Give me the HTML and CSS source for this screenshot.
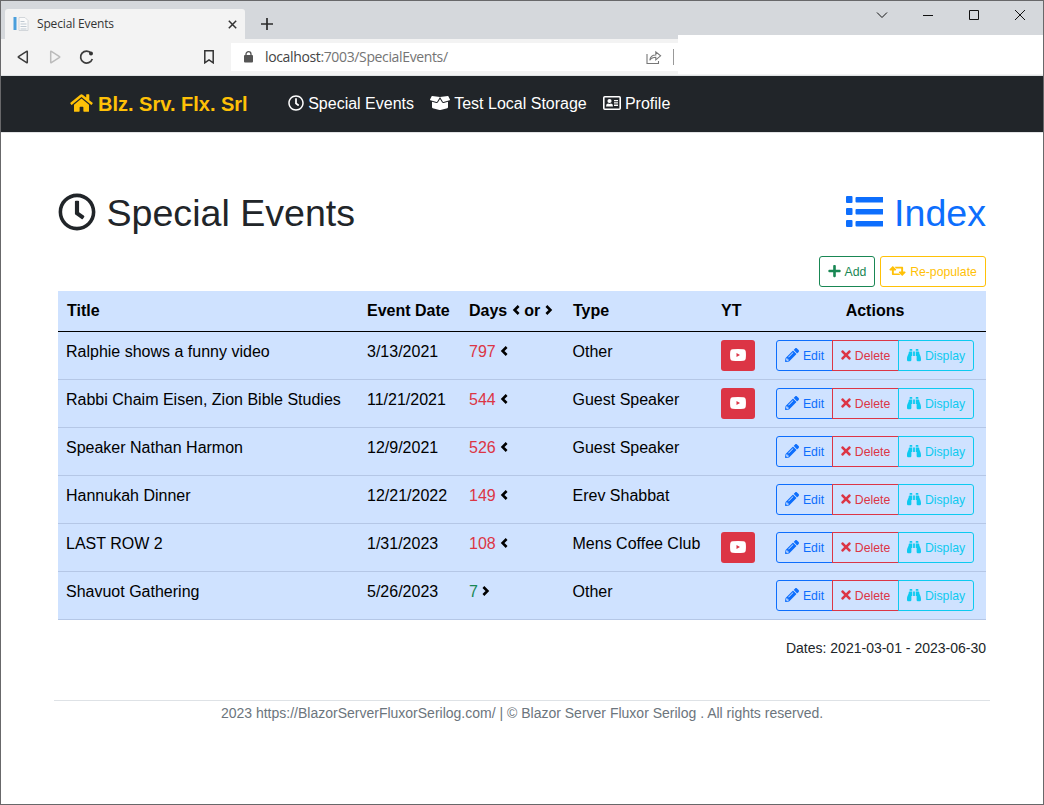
FILE: index.html
```html
<!DOCTYPE html>
<html lang="en">
<head>
<meta charset="utf-8">
<title>Special Events</title>
<link rel="stylesheet" href="styles.css">
</head>
<body>
<svg class="defs" aria-hidden="true">
  <symbol id="clock" viewBox="0 0 512 512"><path d="M256 8C119 8 8 119 8 256s111 248 248 248 248-111 248-248S393 8 256 8zm0 448c-110.500 0-200-89.500-200-200S145.500 56 256 56s200 89.500 200 200-89.500 200-200 200zm61.800-104.400l-84.900-61.700c-3.100-2.300-4.900-5.900-4.900-9.700V116c0-6.600 5.400-12 12-12h32c6.600 0 12 5.400 12 12v141.700l66.800 48.600c5.400 3.900 6.500 11.400 2.600 16.800L334.600 349c-3.900 5.300-11.400 6.500-16.800 2.600z"/></symbol>
  <symbol id="home" viewBox="0 0 576 512"><path d="M280.370 148.260L96 300.110V464a16 16 0 0 0 16 16l112.060-.29a16 16 0 0 0 15.920-16V368a16 16 0 0 1 16-16h64a16 16 0 0 1 16 16v95.640a16 16 0 0 0 16 16.050L464 480a16 16 0 0 0 16-16V300L295.670 148.260a12.190 12.190 0 0 0-15.300 0zM571.600 251.470L488 182.560V44.050a12 12 0 0 0-12-12h-56a12 12 0 0 0-12 12v72.610L318.470 43a48 48 0 0 0-61 0L4.340 251.470a12 12 0 0 0-1.600 16.900l25.500 31A12 12 0 0 0 45.150 301l235.220-193.740a12.190 12.190 0 0 1 15.300 0L530.900 301a12 12 0 0 0 16.900-1.600l25.500-31a12 12 0 0 0-1.700-16.930z"/></symbol>
  <symbol id="box" viewBox="0 0 640 512"><path d="M425.700 256c-16.900 0-32.800-9-41.400-23.400L320 126l-64.200 106.600c-8.700 14.500-24.600 23.500-41.500 23.500-4.500 0-9-.6-13.300-1.900L64 215v178c0 14.700 10 27.500 24.200 31l216.200 54.100c10.200 2.500 20.900 2.500 31 0L551.800 424c14.200-3.600 24.200-16.400 24.200-31V215l-137 39.100c-4.300 1.300-8.800 1.900-13.300 1.900zm212.600-112.200L586.800 41c-3.100-6.200-9.800-9.800-16.700-8.900L320 64l91.700 152.100c3.800 6.300 11.400 9.300 18.500 7.300l197.900-56.500c9.900-2.900 14.700-13.900 10.200-23.100zM53.200 41L1.700 143.800c-4.600 9.200.3 20.200 10.100 23l197.900 56.500c7.100 2 14.700-1 18.500-7.300L320 64 69.800 32.100c-6.900-.8-13.500 2.700-16.600 8.900z"/></symbol>
  <symbol id="card" viewBox="0 0 18 14"><rect x=".8" y=".8" width="16.400" height="12.400" rx="1" fill="none" stroke="currentColor" stroke-width="1.600"/><circle cx="6.500" cy="5" r="2.100"/><path d="M3 10.500Q3 7.800 5 7.600q1.500.6 3 0 2 .2 2 2.900zM11 4h4v1.300h-4zM11 6.300h4v1.300h-4zM11 8.600h4v1.300h-4z"/></symbol>
  <symbol id="list" viewBox="0 0 38 38"><rect x="1" y="3" width="6.500" height="7" rx="1"/><rect x="1" y="15" width="6.500" height="7" rx="1"/><rect x="1" y="27" width="6.500" height="7" rx="1"/><rect x="10.500" y="4" width="28" height="5.500" rx="1"/><rect x="10.500" y="16" width="28" height="5.500" rx="1"/><rect x="10.500" y="28" width="28" height="5.500" rx="1"/></symbol>
  <symbol id="plus" viewBox="0 0 448 512"><path d="M416 208H272V64c0-17.670-14.330-32-32-32h-32c-17.670 0-32 14.330-32 32v144H32c-17.670 0-32 14.330-32 32v32c0 17.670 14.330 32 32 32h144v144c0 17.670 14.330 32 32 32h32c17.670 0 32-14.330 32-32V304h144c17.670 0 32-14.330 32-32v-32c0-17.670-14.330-32-32-32z"/></symbol>
  <symbol id="retweet" viewBox="0 0 17 14"><path d="M3.800 2L7.300 5.600 6.600 6.400H4.800V9.400H9.900l1.500 1.600H3.600Q2.900 11 2.900 10.300V6.400H1L.3 5.600zM13.200 12L9.700 8.400l.7-.8h1.800V4.400H7.100L5.600 2.800h7.800q.7 0 .7.700v4.100H16l.7.800z"/></symbol>
  <symbol id="pencil" viewBox="0 0 512 512"><path d="M497.900 142.100l-46.100 46.100c-4.700 4.700-12.300 4.700-17 0l-111-111c-4.700-4.700-4.700-12.300 0-17l46.100-46.100c18.700-18.700 49.100-18.700 67.900 0l60.100 60.100c18.800 18.700 18.800 49.100 0 67.900zM284.200 99.800L21.600 362.400.4 483.900c-2.900 16.400 11.400 30.600 27.800 27.800l121.500-21.300 262.600-262.600c4.700-4.700 4.700-12.300 0-17l-111-111c-4.800-4.700-12.400-4.700-17.100 0zM124.100 339.900c-5.500-5.500-5.500-14.300 0-19.800l154-154c5.500-5.500 14.300-5.500 19.800 0s5.500 14.300 0 19.800l-154 154c-5.500 5.500-14.300 5.500-19.800 0zM88 424h48v36.300l-64.500 11.300-31.100-31.100L51.700 376H88v48z"/></symbol>
  <symbol id="times" viewBox="0 0 352 512"><path d="M242.720 256l100.070-100.070c12.280-12.280 12.280-32.190 0-44.480l-22.240-22.240c-12.280-12.280-32.190-12.280-44.480 0L176 189.280 75.930 89.210c-12.280-12.280-32.190-12.280-44.480 0L9.210 111.450c-12.280 12.280-12.280 32.190 0 44.480L109.280 256 9.210 356.070c-12.280 12.280-12.280 32.190 0 44.480l22.240 22.240c12.280 12.280 32.200 12.280 44.480 0L176 322.720l100.070 100.070c12.280 12.280 32.200 12.280 44.480 0l22.240-22.240c12.280-12.280 12.280-32.190 0-44.480L242.720 256z"/></symbol>
  <symbol id="binoculars" viewBox="0 0 512 512"><path d="M416 48c0-8.840-7.160-16-16-16h-64c-8.840 0-16 7.160-16 16v48h96V48zM63.910 159.990C61.400 253.840 3.460 274.220 0 404v44c0 17.670 14.330 32 32 32h96c17.670 0 32-14.330 32-32V288h32V128H95.840c-17.630 0-31.450 14.370-31.930 31.990zm384.180 0c-.48-17.620-14.300-31.990-31.930-31.990H320v160h32v160c0 17.670 14.330 32 32 32h96c17.670 0 32-14.330 32-32v-44c-3.460-129.780-61.400-150.160-63.910-244.010zM176 32h-64c-8.840 0-16 7.160-16 16v48h96V48c0-8.840-7.160-16-16-16zm48 256h64V128h-64v160z"/></symbol>
  <symbol id="youtube" viewBox="0 0 16 12"><path fill-rule="evenodd" d="M2.500.3Q8-.2 13.500.3 15.400.5 15.700 2.300q.5 3.700 0 7.400-.3 1.800-2.200 2-5.500.5-11 0Q.6 11.500.3 9.700q-.5-3.700 0-7.400Q.6.500 2.500.3zM6.500 4v4L10 6z"/></symbol>
  <symbol id="less" viewBox="0 0 8 10"><path d="M6.600 1L2.600 5l4 4" fill="none" stroke="currentColor" stroke-width="2.600"/></symbol>
  <symbol id="more" viewBox="0 0 8 10"><path d="M1.400 1l4 4-4 4" fill="none" stroke="currentColor" stroke-width="2.600"/></symbol>
</svg>

<div class="window">
  <div class="tabstrip">
    <div class="tab">
      <svg class="favicon" width="16" height="16" viewBox="0 0 16 16"><path fill="#4a9fdc" d="M.5 1h3v13h-3z"/><path fill="#fafafa" stroke="#c9ced3" stroke-width=".8" d="M6 1.500h6l3 3v10H6z"/><path fill="none" stroke="#bfc9d2" d="M7.500 5.500h4M7.500 8h6M7.500 10.500h6M7.500 13h6"/></svg>
      <span class="tab-title">Special Events</span>
      <svg width="9" height="9" viewBox="0 0 9 9"><path d="M.8.8l7.400 7.400M8.200.8L.8 8.200" stroke="#333" stroke-width="1.500"/></svg>
    </div>
    <svg class="newtab" width="12" height="12" viewBox="0 0 12 12"><path d="M6 0v12M0 6h12" stroke="#2b2b2b" stroke-width="1.700"/></svg>
    <div class="controls">
      <svg width="12" height="12" viewBox="0 0 12 12"><path d="M1 3.500l5 5 5-5"/></svg>
      <svg width="12" height="12" viewBox="0 0 12 12"><path d="M1 6.500h10"/></svg>
      <svg width="12" height="12" viewBox="0 0 12 12"><path d="M1.500 1.500h9v9h-9z"/></svg>
      <svg width="12" height="12" viewBox="0 0 12 12"><path d="M1 1l10 10M11 1L1 11"/></svg>
    </div>
  </div>
  <div class="toolbar">
    <div class="navicons">
      <svg width="12" height="14" viewBox="0 0 12 14"><path d="M10.300 1.700v10.600q0 .7-.7.300L1.500 7.400q-.5-.4 0-.8l8.100-5.200q.7-.4.700.3z" stroke="#3c3c3c"/></svg>
      <svg width="12" height="14" viewBox="0 0 12 14"><path d="M1.700 1.700v10.600q0 .7.700.3l8.100-5.200q.5-.4 0-.8L2.400 1.400q-.7-.4-.7.300z" stroke="#bbb"/></svg>
      <svg class="reload" width="15" height="15" viewBox="0 0 15 15"><path d="M12.300 3.300A6 6 0 1 0 13.300 9" stroke="#3c3c3c" stroke-width="1.700"/><circle cx="12" cy="3.600" r="2" fill="#333"/></svg>
      <svg class="bookmark" width="10" height="14" viewBox="0 0 10 14"><path d="M.8.800h8.400v12L5 9.800l-4.200 3z" stroke="#333"/></svg>
    </div>
    <div class="address">
      <svg width="9" height="12" viewBox="0 0 9 12"><rect y="4" width="9" height="7.500" rx="1" fill="#555"/><path d="M2 5V3.200a2.500 2.500 0 0 1 5 0V5" fill="none" stroke="#555" stroke-width="1.300"/></svg>
      <span class="url"><b>localhost</b>:7003/SpecialEvents/</span>
      <svg class="share" width="16" height="15" viewBox="0 0 16 15"><path d="M1 4v9.500h11.500V11M3.800 10.300q.6-5.300 6-5.300V1.800l4.800 4-4.800 4.100V7.200q-4 0-6 3.100z" fill="none" stroke="#777" stroke-width="1.100"/></svg>
      <i class="divider"></i>
    </div>
    <div class="blank"></div>
  </div>

  <nav class="navbar">
    <a class="brand"><svg width="23" height="20"><use href="#home"/></svg><span>Blz. Srv. Flx. Srl</span></a>
    <a class="link"><svg width="16" height="16"><use href="#clock"/></svg><span>Special Events</span></a>
    <a class="link"><svg width="20" height="16"><use href="#box"/></svg><span>Test Local Storage</span></a>
    <a class="link"><svg width="18" height="14"><use href="#card"/></svg><span>Profile</span></a>
  </nav>

  <main class="content">
    <header class="heading">
      <h1><svg width="38" height="38"><use href="#clock"/></svg><span>Special Events</span></h1>
      <h1 class="index"><svg width="39" height="38" viewBox="0 0 39 38"><use href="#list" width="38" height="38"/></svg><span>Index</span></h1>
    </header>
    <div class="tools">
      <a class="btn green add"><svg width="13" height="14"><use href="#plus"/></svg><span>Add</span></a>
      <a class="btn yellow repop"><svg width="17" height="14"><use href="#retweet"/></svg><span>Re-populate</span></a>
    </div>
    <table class="events">
      <colgroup><col class="c1"><col class="c2"><col class="c3"><col class="c4"><col class="c5"><col class="c6"></colgroup>
      <thead><tr><th>Title</th><th>Event Date</th><th>Days <svg class="chev" width="8" height="10"><use href="#less"/></svg> or <svg class="chev" width="8" height="10"><use href="#more"/></svg></th><th>Type</th><th>YT</th><th class="mid">Actions</th></tr></thead>
      <tbody id="rows"></tbody>
    </table>
    <p class="dates">Dates: 2021-03-01 - 2023-06-30</p>
  </main>
  <footer class="footer">2023 https://BlazorServerFluxorSerilog.com/ | © Blazor Server Fluxor Serilog . All rights reserved.</footer>
</div>
<script src="rows.js"></script>
</body>
</html>
```

FILE: rows.js
```js
const events = [
  ["Ralphie shows a funny video", "3/13/2021", 797, true, "Other", true],
  ["Rabbi Chaim Eisen, Zion Bible Studies", "11/21/2021", 544, true, "Guest Speaker", true],
  ["Speaker Nathan Harmon", "12/9/2021", 526, true, "Guest Speaker", false],
  ["Hannukah Dinner", "12/21/2022", 149, true, "Erev Shabbat", false],
  ["LAST ROW 2", "1/31/2023", 108, true, "Mens Coffee Club", true],
  ["Shavuot Gathering", "5/26/2023", 7, false, "Other", false]
];
const icon = (id, w, h, cls = "") => `<svg class="${cls}" width="${w}" height="${h}"><use href="#${id}"/></svg>`;
document.getElementById("rows").innerHTML = events.map(([title, date, days, past, type, video]) => `
  <tr><td>${title}</td><td>${date}</td>
  <td><span class="${past ? "past" : "future"}">${days}</span> ${icon(past ? "less" : "more", 8, 10, "chev")}</td>
  <td>${type}</td>
  <td>${video ? `<a class="yt">${icon("youtube", 16, 12)}</a>` : ""}</td>
  <td class="actions"><div class="group">
    <a class="btn blue edit">${icon("pencil", 14, 14)}<span>Edit</span></a>
    <a class="btn red delete">${icon("times", 10, 14)}<span>Delete</span></a>
    <a class="btn cyan display">${icon("binoculars", 14, 14)}<span>Display</span></a>
  </div></td></tr>`).join("");
```

FILE: styles.css
```css
* { box-sizing: border-box; }
body { margin: 0; font: 16px/24px "Liberation Sans", Arial, sans-serif; color: #212529; background: #fff; }
svg { fill: currentColor; flex: none; }
.defs { display: none; }
.window { width: 1044px; height: 805px; border: 1px solid #68686a; overflow: hidden; background: #fff; }

.tabstrip { display: flex; height: 38px; padding: 8px 17px 0 4px; background: #d5d8dc; }
.tab { display: flex; align-items: center; width: 240px; height: 30px; padding: 0 8px; background: #f3f3f3; border-radius: 3px 3px 0 0; }
.tab-title { flex: 1; margin-left: 8px; font: 12px/16px "Open Sans", sans-serif; letter-spacing: -.15px; color: #333; }
.newtab { margin: 9px 0 0 16px; }
.controls { display: flex; gap: 34px; margin-left: auto; }
.controls svg { fill: none; stroke: #111; stroke-width: 1; }

.toolbar { display: flex; height: 37px; background: #f3f3f3; border-bottom: 1px solid #dfe3e4; }
.navicons { display: flex; align-items: center; width: 230px; padding-left: 16px; gap: 20px; }
.navicons svg { fill: none; stroke-width: 1.5; }
.navicons .reload { margin-left: -2px; }
.navicons .bookmark { margin-left: 90px; }
.address { display: flex; align-items: center; width: 447px; height: 28px; margin-top: 4px; padding: 0 4px 0 13px; background: #fff; }
.url { flex: 1; margin-left: 12px; font: 14px/20px "Open Sans", sans-serif; letter-spacing: -.36px; color: #747474; }
.url b { font-weight: 400; color: #444; }
.divider { width: 1px; height: 16px; margin-left: 11px; background: #999; }
.blank { flex: 1; height: 39px; margin: -4px 0 0; background: #fff; }

.navbar { display: flex; align-items: center; height: 57px; padding: 0 0 2px 69px; background: #212529; color: #fff; border-bottom: 1px solid #e2e3e5; }
.navbar span { padding-top: 2px; }
.brand { display: flex; align-items: center; gap: 5px; width: 218px; color: #ffc107; font-size: 20px; font-weight: 700; }
.link { display: flex; align-items: center; gap: 4.2px; margin-right: 16px; }

.content { padding: 55px 57px 0; }
.heading { display: flex; justify-content: space-between; height: 48px; }
h1 { display: flex; align-items: center; gap: 10.5px; margin: 0; font-size: 37.6px; line-height: 48px; font-weight: 400; }
h1 span { padding-top: 2px; }
.index { color: #0d6efd; }
.tools { display: flex; justify-content: flex-end; gap: 5px; margin-top: 20px; }
.btn { display: flex; align-items: center; justify-content: center; gap: 4px; height: 31px; border: 1px solid currentColor; border-radius: 3px; font-size: 12.25px; }
.btn svg, .yt svg { margin-bottom: 2px; }
.add { width: 56px; }
.repop { width: 106px; }
.green { color: #198754; }
.yellow { color: #ffc107; }
.blue { color: #0d6efd; }
.red { color: #dc3545; }
.cyan { color: #0dcaf0; }

.events { width: 928px; margin-top: 4px; border-collapse: separate; border-spacing: 0; table-layout: fixed; background: #cfe2ff; color: #000; }
.c1 { width: 301px; }
.c2 { width: 102px; }
.c3 { width: 104px; }
.c4 { width: 148px; }
.c5 { width: 51px; }
.c6 { width: 222px; }
.events th { height: 41px; padding: 8px 0 8px 8px; border-bottom: 1px solid #000; text-align: left; white-space: nowrap; }
.events th:first-child { padding-left: 9px; }
.events .mid { padding-left: 0; text-align: center; }
.events td { height: 48px; padding: 8px 0 8px 8px; border-bottom: 1px solid #b5c7e6; vertical-align: top; white-space: nowrap; }
.events td:nth-child(4) { padding-left: 7.5px; }
.events .actions { padding-left: 12px; }
.chev { vertical-align: 1px; }
.past { color: #dc3545; }
.future { color: #198754; }
.yt { display: flex; align-items: center; justify-content: center; width: 34px; height: 31px; border-radius: 3px; background: #dc3545; color: #fff; }
.group { display: flex; }
.edit { width: 57px; border-radius: 3px 0 0 3px; }
.delete { width: 67px; margin-left: -1px; border-radius: 0; }
.display { width: 76px; margin-left: -1px; border-radius: 0 3px 3px 0; }

.dates { margin: 18px 0 0; font-size: 14px; line-height: 21px; text-align: right; }
.footer { margin: 41px 53px 0; padding-top: 2px; border-top: 1px solid #dee2e6; font-size: 14px; line-height: 21px; text-align: center; color: #6c757d; }
```
